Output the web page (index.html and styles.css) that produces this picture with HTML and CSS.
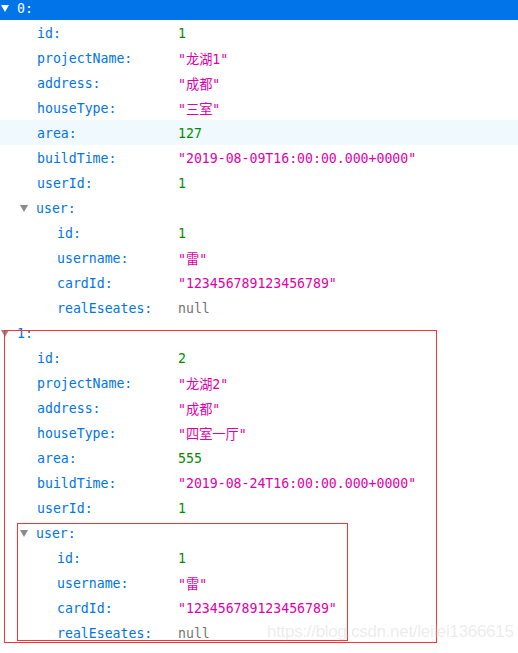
FILE: index.html
```html
<!DOCTYPE html>
<html>
<head>
<meta charset="utf-8">
<link rel="stylesheet" href="styles.css">
</head>
<body>
<div class="tree">
  <div class="row selected lvl0"><span class="twisty open"></span><span class="key">0:</span></div>
  <div class="row lvl1"><span class="key">id:</span><span class="val num">1</span></div>
  <div class="row lvl1"><span class="key">projectName:</span><span class="val str">"龙湖1"</span></div>
  <div class="row lvl1"><span class="key">address:</span><span class="val str">"成都"</span></div>
  <div class="row lvl1"><span class="key">houseType:</span><span class="val str">"三室"</span></div>
  <div class="row lvl1 hover"><span class="key">area:</span><span class="val num">127</span></div>
  <div class="row lvl1"><span class="key">buildTime:</span><span class="val str">"2019-08-09T16:00:00.000+0000"</span></div>
  <div class="row lvl1"><span class="key">userId:</span><span class="val num">1</span></div>
  <div class="row lvl1 parent"><span class="twisty open"></span><span class="key">user:</span></div>
  <div class="row lvl2"><span class="key">id:</span><span class="val num">1</span></div>
  <div class="row lvl2"><span class="key">username:</span><span class="val str">"雷"</span></div>
  <div class="row lvl2"><span class="key">cardId:</span><span class="val str">"123456789123456789"</span></div>
  <div class="row lvl2"><span class="key">realEseates:</span><span class="val nul">null</span></div>
  <div class="row lvl0"><span class="twisty open"></span><span class="key">1:</span></div>
  <div class="row lvl1"><span class="key">id:</span><span class="val num">2</span></div>
  <div class="row lvl1"><span class="key">projectName:</span><span class="val str">"龙湖2"</span></div>
  <div class="row lvl1"><span class="key">address:</span><span class="val str">"成都"</span></div>
  <div class="row lvl1"><span class="key">houseType:</span><span class="val str">"四室一厅"</span></div>
  <div class="row lvl1"><span class="key">area:</span><span class="val num">555</span></div>
  <div class="row lvl1"><span class="key">buildTime:</span><span class="val str">"2019-08-24T16:00:00.000+0000"</span></div>
  <div class="row lvl1"><span class="key">userId:</span><span class="val num">1</span></div>
  <div class="row lvl1 parent"><span class="twisty open"></span><span class="key">user:</span></div>
  <div class="row lvl2"><span class="key">id:</span><span class="val num">1</span></div>
  <div class="row lvl2"><span class="key">username:</span><span class="val str">"雷"</span></div>
  <div class="row lvl2"><span class="key">cardId:</span><span class="val str">"123456789123456789"</span></div>
  <div class="row lvl2"><span class="key">realEseates:</span><span class="val nul">null</span></div>
</div>
<div class="mark mark-outer"></div>
<div class="mark mark-inner"></div>
<div class="watermark">https://blog.csdn.net/leilei1366615</div>
</body>
</html>
```

FILE: styles.css
```css
html, body {
  margin: 0;
  padding: 0;
  background: #ffffff;
  width: 518px;
  height: 653px;
  overflow: hidden;
}
body {
  position: relative;
  font-family: "DejaVu Sans Mono", "Noto Sans CJK SC", monospace;
  font-size: 13.2px;
}
.tree {
  margin-top: -5px;
  display: flex;
  flex-direction: column;
}
.row {
  height: 25px;
  padding-top: 2px;
  box-sizing: border-box;
  display: flex;
  align-items: center;
  white-space: nowrap;
}
.row .key {
  color: #0074e8;
  box-sizing: border-box;
}
.lvl0 .key { padding-left: 17px; flex: none; }
.lvl1 .key { padding-left: 37px; width: 178px; flex: none; }
.lvl2 .key { padding-left: 57px; width: 178px; flex: none; }
.lvl0 .twisty, .lvl1 .twisty {
  width: 16px;
  height: 23px;
  flex: none;
  display: flex;
  align-items: center;
}
.lvl0 .twisty { margin-left: 1px; }
.lvl1 .twisty { margin-left: 20px; }
.lvl0 .twisty + .key, .lvl1 .twisty + .key { padding-left: 0; }
.twisty::before {
  content: "";
  width: 0;
  height: 0;
  border-left: 4px solid transparent;
  border-right: 4px solid transparent;
  border-top: 7px solid #8a8a8a;
}
.selected {
  background: #0074e8;
}
.selected .key { color: #ffffff; }
.selected .twisty::before { border-top-color: #ffffff; }
.hover { background: #f0f9fe; }
.val { flex: none; }
.num { color: #058b00; }
.str { color: #dd00a9; }
.nul { color: #737373; }
.mark {
  position: absolute;
  border: 1px solid #ff3333;
  box-sizing: border-box;
}
.mark-outer { left: 4px; top: 330px; width: 433px; height: 313px; }
.mark-inner { left: 17px; top: 523px; width: 331px; height: 118px; }
.watermark {
  position: absolute;
  left: 267px;
  top: 622px;
  font-family: "Liberation Sans", Arial, sans-serif;
  font-size: 17px;
  color: rgba(200, 200, 200, 0.35);
  text-shadow: 0 0 1px rgba(255,255,255,0.6);
  letter-spacing: -0.3px;
}
```
